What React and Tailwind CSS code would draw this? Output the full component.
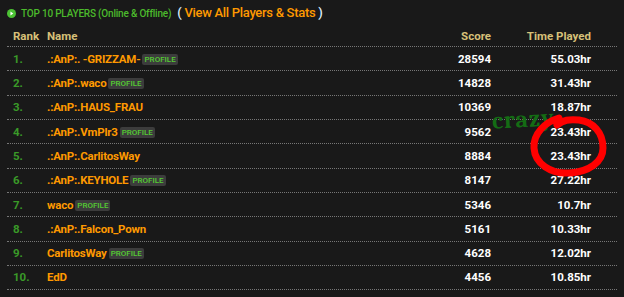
import React from 'react';

const players = [
  { name: '.:AnP:. -GRIZZAM-', profile: true, score: 28594, time: '55.03hr' },
  { name: '.:AnP:.waco', profile: true, score: 14828, time: '31.43hr' },
  { name: '.:AnP:.HAUS_FRAU', profile: false, score: 10369, time: '18.87hr' },
  { name: '.:AnP:.VmPlr3', profile: true, score: 9562, time: '23.43hr' },
  { name: '.:AnP:.CarlitosWay', profile: false, score: 8884, time: '23.43hr' },
  { name: '.:AnP:.KEYHOLE', profile: true, score: 8147, time: '27.22hr' },
  { name: 'waco', profile: true, score: 5346, time: '10.7hr' },
  { name: '.:AnP:.Falcon_Pown', profile: false, score: 5161, time: '10.33hr' },
  { name: 'CarlitosWay', profile: true, score: 4628, time: '12.02hr' },
  { name: 'EdD', profile: false, score: 4456, time: '10.85hr' },
];

function App() {
  return (
    <div className="relative w-[624px] h-[297px] bg-[#191919] overflow-hidden font-['Roboto',sans-serif]">
      {/* Title bar */}
      <div className="flex items-center h-[26px] pl-[7px]">
        <svg width="9" height="9" viewBox="0 0 10 10" className="mr-[5px]">
          <circle cx="5" cy="5" r="5" fill="#4cc234" />
          <path d="M3.8 2.8 L7 5 L3.8 7.2 Z" fill="#ffffff" />
        </svg>
        <span className="text-[10px] font-medium text-[#4cbb2c] tracking-[-0.2px]">TOP 10 PLAYERS (Online &amp; Offline)</span>
        <span className="ml-[6px] text-[13px] font-medium text-[#ff9900] tracking-[-0.3px]">
          <span className="text-[#dfeeff]">(</span> View All Players &amp; Stats <span className="text-[#dfeeff]">)</span>
        </span>
      </div>

      {/* Table */}
      <div className="mx-[7px] w-[610px]">
        <div className="flex items-start pt-[2px] h-[21px] border-b border-dotted border-[#777] text-[11.5px] font-bold text-[#d6c078]">
          <div className="w-[40px] pl-[6px]">Rank</div>
          <div className="flex-1">Name</div>
          <div className="w-[100px] text-right">Score</div>
          <div className="w-[100px] text-right">Time Played</div>
          <div className="w-[26px]" />
        </div>
        {players.map((p, i) => (
          <div key={i} className="flex items-center pt-[1px] h-[24.33px] border-b border-dotted border-[#777] text-[11.5px] font-bold">
            <div className="w-[40px] pl-[6px] text-[#3a9a28]">{i + 1}.</div>
            <div className="flex-1 flex items-center text-[#ff9900]">
              <span className="tracking-[-0.2px]">{p.name}</span>
              {p.profile && (
                <span className="ml-[2px] px-[2px] h-[11px] leading-[11px] rounded-[2px] bg-[#3c3c3c] text-[#55cc33] text-[8px] font-medium">
                  PROFILE
                </span>
              )}
            </div>
            <div className="w-[100px] text-right text-white">{p.score}</div>
            <div className="w-[100px] text-right text-white">{p.time}</div>
            <div className="w-[26px]" />
          </div>
        ))}
      </div>

      {/* Annotation */}
      <div className="absolute left-[492px] top-[107px] -rotate-3">
        <span className="block text-[24px] leading-[24px] font-serif font-bold text-[#146c14] tracking-[1px]">crazy</span>
      </div>
      <svg className="absolute left-[525px] top-[108px]" width="90" height="72" viewBox="0 0 90 72">
        <path
          d="M34 10 C20 14 8 26 9 40 C10 56 26 66 44 65 C64 64 78 54 78 40 C78 24 68 14 54 12 C44 11 38 12 32 17"
          fill="none"
          stroke="#ff0000"
          strokeWidth="7"
          strokeLinecap="round"
        />
      </svg>
    </div>
  );
}

export default App;
